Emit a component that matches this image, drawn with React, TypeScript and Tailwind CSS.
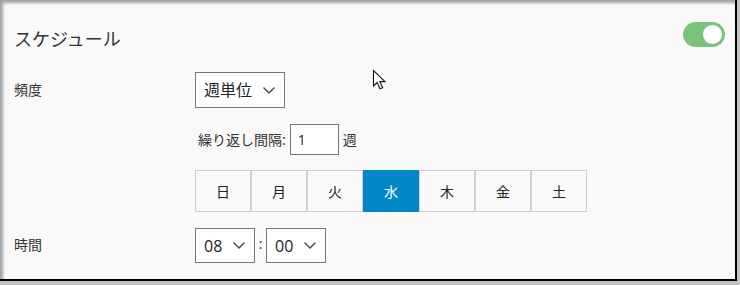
import React from "react";

const FONT = "font-['Open_Sans','Noto_Sans_CJK_JP',sans-serif]";

function Chevron({ className = "" }: { className?: string }) {
  return (
    <svg width="12" height="7" viewBox="0 0 12 7" className={className} fill="none">
      <path d="M1 1 L6 6 L11 1" stroke="#555" strokeWidth="1.6" strokeLinecap="round" strokeLinejoin="round" />
    </svg>
  );
}

function Select({ value, w, h, textClass }: { value: string; w: string; h: string; textClass: string }) {
  return (
    <div className={`flex items-center justify-between border border-[#767676] bg-white pl-[8px] pr-[9px] ${w} ${h}`}>
      <span className={`${textClass} text-[#222]`}>{value}</span>
      <Chevron />
    </div>
  );
}

const days = ["日", "月", "火", "水", "木", "金", "土"];

export default function App() {
  return (
    <div className={`w-[740px] h-[285px] bg-[#c3c3c3] ${FONT}`}>
      <div className="relative w-[737px] h-[281px] bg-[#f9f9f9] border-r-2 border-b-2 border-black shadow-[inset_4px_4px_3px_-1px_rgba(0,0,0,0.35)] pl-[14px] pr-[10px]">
        {/* header */}
        <div className="flex items-start justify-between pt-[22px]">
          <h1 className="mt-[3px] text-[18px] leading-[28px] text-[#333] font-normal">スケジュール</h1>
          <div className="flex items-center justify-end w-[42px] h-[25px] rounded-full bg-[#78c47b] pr-[3px]">
            <div className="w-[19px] h-[19px] rounded-full bg-white" />
          </div>
        </div>

        {/* frequency */}
        <div className="flex mt-[19px]">
          <div className="w-[181px] pt-[8px] text-[14px] leading-[20px] text-[#333]">頻度</div>
          <div className="flex flex-col">
            <Select value="週単位" w="w-[90px]" h="h-[36px]" textClass="text-[16px] leading-[22px]" />
            <div className="flex items-center mt-[16px] pl-[3px] gap-[4px] text-[14px] text-[#333]">
              <span className="leading-[20px]">繰り返し間隔:</span>
              <div className="flex items-center w-[49px] h-[31px] border border-[#767676] bg-white pl-[7px] text-[14px] text-[#222]">1</div>
              <span className="leading-[20px]">週</span>
            </div>
            <div className="flex mt-[15px]">
              {days.map((d) => (
                <div
                  key={d}
                  className={
                    d === "水"
                      ? "flex items-center justify-center w-[56px] h-[42px] border border-[#0288c6] bg-[#0288c6] text-white text-[14px]"
                      : "flex items-center justify-center w-[56px] h-[42px] border border-[#cfcfcf] bg-[#f9f9f9] text-[#222] text-[14px]"
                  }
                >
                  {d}
                </div>
              ))}
            </div>
          </div>
        </div>

        {/* time */}
        <div className="flex mt-[16px]">
          <div className="w-[181px] pt-[7px] text-[14px] leading-[20px] text-[#333]">時間</div>
          <div className="flex items-center">
            <Select value="08" w="w-[60px]" h="h-[35px]" textClass="text-[16px] leading-[22px]" />
            <span className="w-[11px] text-center text-[14px] text-[#333] leading-[20px] -mt-[3px]">:</span>
            <Select value="00" w="w-[60px]" h="h-[35px]" textClass="text-[16px] leading-[22px]" />
          </div>
        </div>

        {/* mouse cursor */}
        <svg className="absolute left-[372px] top-[69px]" width="16" height="22" viewBox="0 0 16 22">
          <path d="M1.5 1.5 L1.5 17 L5.2 13.5 L8 19.8 L10.6 18.7 L7.9 12.6 L13 12.6 Z" fill="white" stroke="#111" strokeWidth="1.1" strokeLinejoin="miter" />
        </svg>
      </div>
    </div>
  );
}
